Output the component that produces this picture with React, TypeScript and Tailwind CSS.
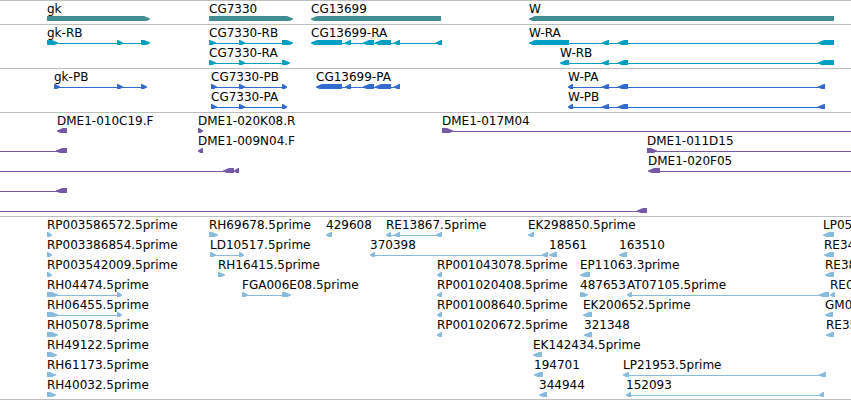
type Span = [start: number, end: number];

interface Feature {
  name?: string;
  dir: 'fwd' | 'rev';
  exons: Span[];
  // The connector runs on past the visible window on this side.
  open?: 'left' | 'right';
}

interface Track {
  title: string;
  fill: string;
  rows: Feature[][];
}

const fwd = (name: string, ...exons: Span[]): Feature => ({ name, dir: 'fwd', exons });
const rev = (name: string, ...exons: Span[]): Feature => ({ name, dir: 'rev', exons });
const openLeft = (...exons: Span[]): Feature => ({ dir: 'rev', exons, open: 'left' });
const openRight = (f: Feature): Feature => ({ ...f, open: 'right' });

const tracks: Track[] = [
  {
    title: 'Genes',
    fill: 'fill-[#408e92]',
    rows: [
      [fwd('gk', [47, 150]), fwd('CG7330', [209, 293]), rev('CG13699', [311, 441]), rev('W', [529, 834])],
    ],
  },
  {
    title: 'Transcripts',
    fill: 'fill-[#009fc1]',
    rows: [
      [
        fwd('gk-RB', [47, 58], [117, 123], [141, 150]),
        fwd('CG7330-RB', [209, 216], [239, 245], [282, 293]),
        rev('CG13699-RA', [311, 342], [345, 351], [363, 374], [375, 391], [394, 400], [436, 442]),
        rev('W-RA', [529, 569], [602, 609], [618, 628], [818, 834]),
      ],
      [
        fwd('CG7330-RA', [209, 216], [239, 245], [282, 290]),
        rev('W-RB', [560, 569], [602, 609], [618, 628], [818, 834]),
      ],
    ],
  },
  {
    title: 'Coding sequences',
    fill: 'fill-[#316bce]',
    rows: [
      [
        fwd('gk-PB', [54, 60], [117, 123], [141, 147]),
        fwd('CG7330-PB', [211, 217], [239, 245], [282, 287]),
        rev('CG13699-PA', [316, 342], [345, 351], [363, 374], [375, 391], [394, 400]),
        rev('W-PA', [568, 573], [602, 609], [618, 628], [818, 825]),
      ],
      [
        fwd('CG7330-PA', [211, 217], [239, 245], [282, 287]),
        rev('W-PB', [568, 573], [602, 609], [618, 628], [818, 825]),
      ],
    ],
  },
  {
    title: 'End reads',
    fill: 'fill-[#7559a8]',
    rows: [
      [rev('DME1-010C19.F', [57, 67]), fwd('DME1-020K08.R', [198, 203]), openRight(fwd('DME1-017M04', [442, 453]))],
      [openLeft([56, 67]), rev('DME1-009N04.F', [198, 203]), openRight(fwd('DME1-011D15', [647, 657]))],
      [openLeft([223, 234], [234, 239]), openRight(rev('DME1-020F05', [648, 660]))],
      [openLeft([56, 67])],
      [openLeft([637, 647])],
    ],
  },
  {
    title: 'ESTs',
    fill: 'fill-[#87bcde]',
    rows: [
      [
        fwd('RP003586572.5prime', [47, 52]),
        fwd('RH69678.5prime', [209, 218]),
        rev('429608', [326, 332]),
        rev('RE13867.5prime', [386, 391], [394, 400], [436, 442]),
        rev('EK298850.5prime', [528, 534]),
        rev('LP05', [823, 834]),
      ],
      [
        fwd('RP003386854.5prime', [47, 52]),
        fwd('LD10517.5prime', [210, 216], [239, 244]),
        rev('370398', [370, 375], [542, 548]),
        rev('18561', [549, 557]),
        rev('163510', [619, 627]),
        rev('RE34', [824, 834]),
      ],
      [
        fwd('RP003542009.5prime', [47, 52]),
        fwd('RH16415.5prime', [218, 225]),
        rev('RP001043078.5prime', [437, 442]),
        rev('EP11063.3prime', [580, 590]),
        rev('RE38', [825, 834]),
      ],
      [
        fwd('RH04474.5prime', [47, 58], [117, 122]),
        fwd('FGA006E08.5prime', [242, 248], [282, 291]),
        rev('RP001020408.5prime', [437, 442]),
        fwd('487653', [580, 588]),
        rev('AT07105.5prime', [627, 632], [819, 829]),
        rev('RE0', [830, 835]),
      ],
      [
        fwd('RH06455.5prime', [47, 58], [117, 122]),
        rev('RP001008640.5prime', [437, 442]),
        rev('EK200652.5prime', [583, 592]),
        rev('GM0', [825, 833]),
      ],
      [
        fwd('RH05078.5prime', [47, 58]),
        rev('RP001020672.5prime', [437, 442]),
        rev('321348', [584, 592]),
        rev('RE35', [826, 834]),
      ],
      [fwd('RH49122.5prime', [47, 57]), rev('EK142434.5prime', [533, 542])],
      [
        fwd('RH61173.5prime', [47, 56]),
        rev('194701', [534, 543]),
        rev('LP21953.5prime', [623, 629], [819, 826]),
      ],
      [
        fwd('RH40032.5prime', [47, 56]),
        rev('344944', [539, 547]),
        rev('152093', [626, 631], [819, 824]),
      ],
    ],
  },
];

const MID = 18;

// A bar with an arrow tip at the end that the feature reads towards.
function exonPoints([start, end]: Span, dir: Feature['dir']) {
  const length = end - start;
  const tip = Math.min(6, length - 1);
  const outline = [
    [0, 15],
    [length - tip, 15],
    [length, 17.5],
    [length, 18.5],
    [length - tip, 21],
    [0, 21],
  ];
  return outline.map(([x, y]) => `${dir === 'fwd' ? start + x : end - x},${y}`).join(' ');
}

function Glyph({ feature }: { feature: Feature }) {
  const { exons, dir, open } = feature;
  const first = exons[0][0];
  const last = exons[exons.length - 1][1];
  return (
    <g>
      {open === 'right' && <rect x={first + 2} y={MID} width="100%" height="1" />}
      {open === 'left' && <rect x="0" y={MID} width={last} height="1" />}
      {exons.length > 1 && <rect x={first + 1} y={MID} width={last - first - 2} height="1" />}
      {exons.map((exon) => (
        <polygon key={exon[0]} points={exonPoints(exon, dir)} />
      ))}
    </g>
  );
}

function Row({ features, fill }: { features: Feature[]; fill: string }) {
  return (
    <li className="relative h-5 overflow-hidden">
      <svg className={`block h-5 w-full ${fill}`} aria-hidden="true">
        {features.map((feature) => (
          <Glyph key={feature.exons[0][0]} feature={feature} />
        ))}
      </svg>
      {features.map(
        (feature) =>
          feature.name && (
            <span
              key={feature.name}
              className="absolute top-0 whitespace-nowrap"
              style={{ left: feature.exons[0][0] }}
            >
              {feature.name}
            </span>
          ),
      )}
    </li>
  );
}

export default function App() {
  return (
    <main className="w-full overflow-hidden border-b border-[#bebebe] bg-white font-['DejaVu_Sans',sans-serif] text-xs leading-4 text-black">
      {tracks.map((track) => (
        <section key={track.title} aria-label={track.title} className="border-t border-[#bebebe] pb-[3px] last:pb-[2px]">
          <ul>
            {track.rows.map((row, i) => (
              <Row key={i} features={row} fill={track.fill} />
            ))}
          </ul>
        </section>
      ))}
    </main>
  );
}
